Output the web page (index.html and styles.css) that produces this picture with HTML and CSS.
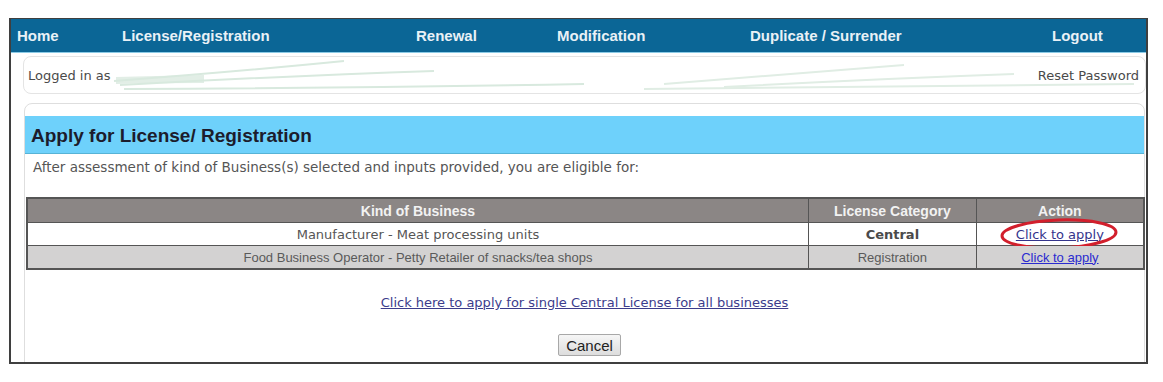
FILE: index.html
```html
<!DOCTYPE html>
<html>
<head>
  <title>Apply for License/ Registration</title>
  <link rel="stylesheet" href="styles.css">
</head>
<body>
  <div class="frame">
    <div class="nav">
      <a href="#">Home</a>
      <a href="#">License/Registration</a>
      <a href="#">Renewal</a>
      <a href="#">Modification</a>
      <a href="#">Duplicate / Surrender</a>
      <a href="#">Logout</a>
    </div>

    <div class="userbar">
      <svg class="swoosh" width="1122" height="38" viewBox="0 0 1122 38">
        <path d="M92 20 Q130 19 180 18 L180 26 Q130 26 92 27 Z" class="band" />
        <path d="M90 24 Q220 14 320 4" />
        <path d="M96 28 Q260 19 410 14" />
        <path d="M100 32 Q330 31 560 27" />
        <path d="M620 32 Q830 30 1110 27" class="thin" />
        <path d="M640 27 Q780 16 880 8" class="thin" />
        <path d="M700 30 Q850 22 990 17" class="thin" />
      </svg>
      <span>Logged in as</span>
      <a href="#">Reset Password</a>
    </div>

    <div class="content">
      <h2 class="title">Apply for License/ Registration</h2>
      <p class="note">After assessment of kind of Business(s) selected and inputs provided, you are eligible for:</p>

      <table class="result">
        <colgroup>
          <col class="col-kind">
          <col class="col-cat">
          <col class="col-act">
        </colgroup>
        <tr>
          <th>Kind of Business</th>
          <th>License Category</th>
          <th>Action</th>
        </tr>
        <tr class="row-main">
          <td>Manufacturer - Meat processing units</td>
          <td class="cat">Central</td>
          <td class="act">
            <a href="#">Click to apply</a>
            <svg class="mark" width="122" height="34" viewBox="0 0 122 34">
              <ellipse cx="60" cy="17" rx="57" ry="14" transform="rotate(-2 60 17)" />
            </svg>
          </td>
        </tr>
        <tr class="row-alt">
          <td>Food Business Operator - Petty Retailer of snacks/tea shops</td>
          <td>Registration</td>
          <td class="act"><a href="#">Click to apply</a></td>
        </tr>
      </table>

      <p class="single"><a href="#">Click here to apply for single Central License for all businesses</a></p>
      <div class="actions">
        <button type="button">Cancel</button>
      </div>
    </div>
  </div>
</body>
</html>
```

FILE: styles.css
```css
body {
  margin: 0;
  padding: 0;
  background-color: #fff;
  font-family: "DejaVu Sans", Verdana, sans-serif;
}

.frame {
  margin: 18px 0 0 9px;
  width: 1135px;
  height: 343px;
  border: 2px solid #3f3f3f;
  border-top-width: 1px;
  overflow: hidden;
}

.nav {
  display: grid;
  grid-template-columns: 105px 294px 141px 193px 302px 1fr;
  align-items: center;
  height: 33px;
  padding-left: 6px;
  background-color: #0b6696;
  border-bottom: 1px solid #8ccbe6;
}

.nav a {
  color: #e9f1f6;
  font-family: "Liberation Sans", Arial, sans-serif;
  font-weight: bold;
  font-size: 15px;
  text-decoration: none;
}

.userbar {
  position: relative;
  display: flex;
  justify-content: space-between;
  align-items: center;
  height: 36px;
  margin: 3px 0 0 12px;
  padding: 0 6px 0 4px;
  border: 1px solid #e4e4e4;
  border-radius: 8px;
  font-size: 13px;
  color: #4a4a4a;
}

.userbar span,
.userbar a {
  position: relative;
  color: #4a4a4a;
  text-decoration: none;
}

.swoosh {
  position: absolute;
  left: 0;
  top: 0;
}

.swoosh path {
  fill: none;
  stroke: #d8e9de;
  stroke-width: 2;
}

.swoosh .thin {
  stroke: #e0ede4;
}

.swoosh .band {
  fill: #e2eee6;
  stroke: none;
}

.content {
  margin: 9px 1px 0 13px;
  padding: 12px 0 0 0;
  height: 400px;
  border: 1px solid #dedede;
  border-radius: 8px;
}

.title {
  margin: 0;
  height: 37px;
  line-height: 39px;
  padding-left: 6px;
  background-color: #6ed1fb;
  border-bottom: 1px solid #57b3d6;
  font-family: "Liberation Sans", Arial, sans-serif;
  font-size: 19px;
  font-weight: bold;
  color: #1c1c2c;
}

.note {
  margin: 0;
  padding: 5px 0 0 8px;
  line-height: 16px;
  font-size: 13.5px;
  color: #555;
}

.result {
  width: 1119px;
  margin: 22px 0 0 1px;
  border-collapse: collapse;
  border: 2px solid #555;
  text-align: center;
}

.col-kind {
  width: 783px;
}

.col-cat,
.col-act {
  width: 168px;
}

.result th {
  height: 23px;
  padding: 0;
  background-color: #8b8685;
  border: 1px solid #555;
  color: #f2f2f2;
  font-family: "Liberation Sans", Arial, sans-serif;
  font-size: 14px;
  font-weight: bold;
}

.result td {
  height: 22px;
  padding: 0;
  border: 1px solid #555;
}

.row-main td {
  background-color: #fff;
  font-size: 13px;
  color: #555;
}

.row-main .cat {
  font-weight: bold;
  color: #4a4a4a;
}

.row-alt td {
  background-color: #d3d2d2;
  font-family: "Liberation Sans", Arial, sans-serif;
  font-size: 13px;
  color: #5a5a5a;
}

.act {
  position: relative;
}

.row-main .act a {
  color: #34348c;
}

.row-alt .act a {
  color: #2a2ad0;
}

.mark {
  position: absolute;
  left: 22px;
  top: -6px;
  pointer-events: none;
}

.mark ellipse {
  fill: none;
  stroke: #d21f2c;
  stroke-width: 3;
}

.single {
  margin: 25px 0 0 0;
  line-height: 16px;
  text-align: center;
  font-size: 13px;
}

.single a {
  color: #3c3c8c;
}

.actions {
  margin-top: 23px;
  text-align: center;
}

.actions button {
  height: 22px;
  padding: 0 7px;
  margin-left: 10px;
  background: linear-gradient(#f6f6f6, #dddddd);
  border: 1px solid #a8a8a8;
  border-radius: 2px;
  font-family: "Liberation Sans", Arial, sans-serif;
  font-size: 15px;
  color: #222;
}
```
